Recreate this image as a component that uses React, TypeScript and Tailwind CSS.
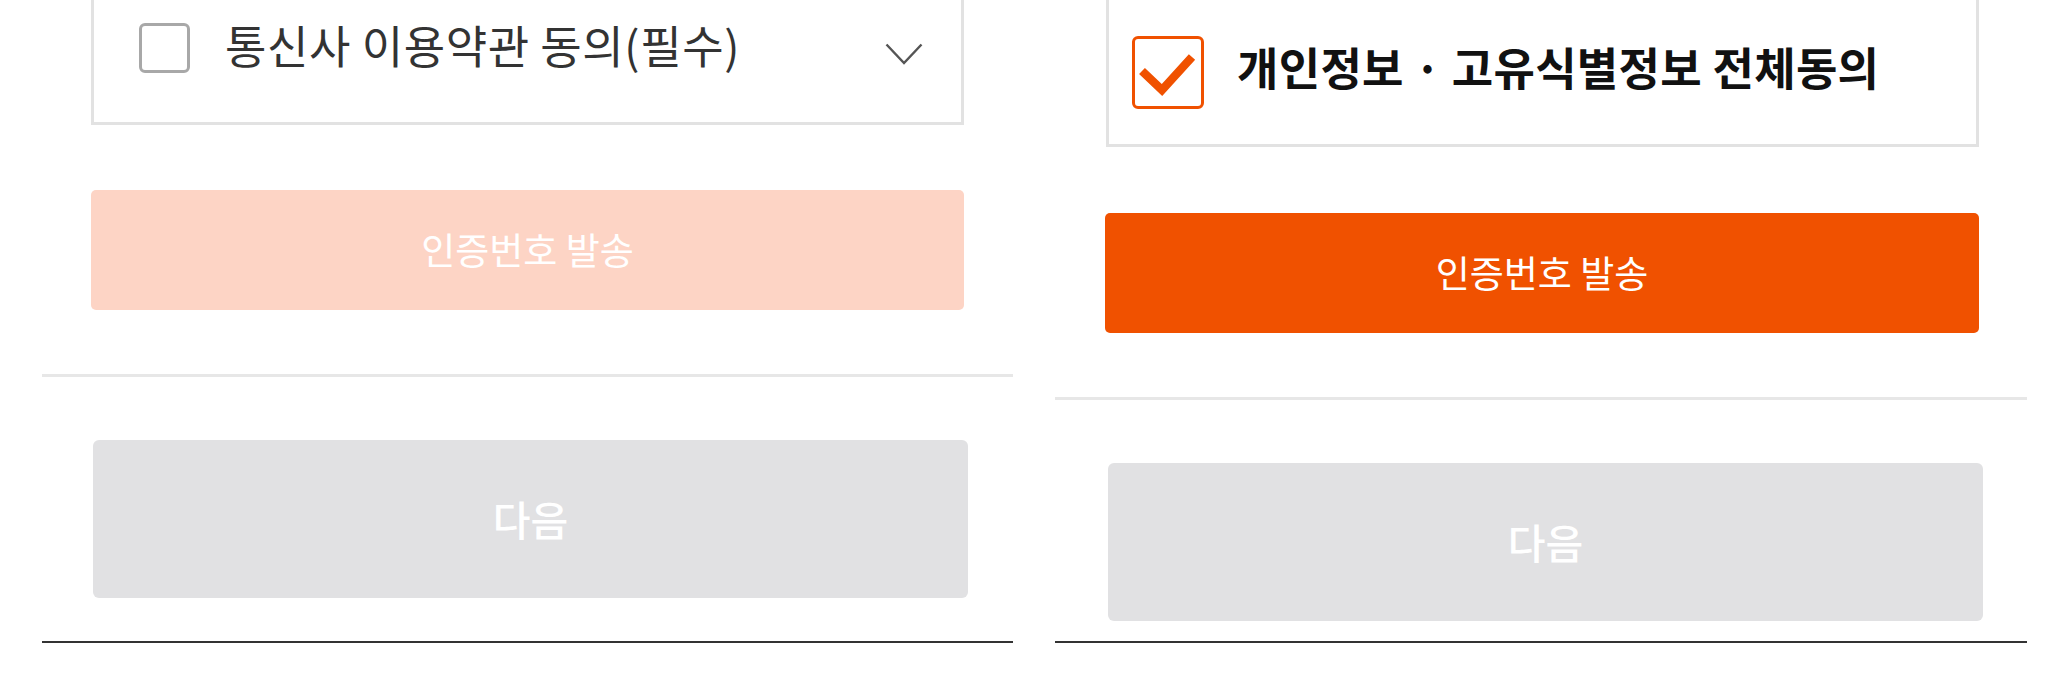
import React from "react";

const font = { fontFamily: '"Noto Sans CJK KR", "Noto Sans", sans-serif' };

function ChevronDown() {
  return (
    <svg width="38" height="22" viewBox="0 0 38 22" fill="none" className="shrink-0">
      <path d="M1.5 1.5 L19 20 L36.5 1.5" stroke="#555555" strokeWidth="2.4" />
    </svg>
  );
}

function CheckMark() {
  return (
    <svg width="66" height="67" viewBox="0 0 66 67" fill="none">
      <path d="M7 32 L27 51 L57 18" stroke="#f05100" strokeWidth="8.5" />
    </svg>
  );
}

function Divider() {
  return <div className="h-[3px] w-full bg-[#e7e7e7]" />;
}

function NextButton({ className }: { className: string }) {
  return (
    <button
      disabled
      className={`h-[158px] w-[875px] rounded-[6px] bg-[#e1e1e3] text-[41px] font-medium text-white ${className}`}
    >
      다음
    </button>
  );
}

function LeftColumn() {
  return (
    <div className="flex h-[674px] w-[971px] flex-col pb-[31px]">
      <div className="ml-[49px] flex h-[125px] w-[873px] items-start border-x-[3px] border-b-[3px] border-[#e2e2e2] pl-[45px] pr-[38px] pt-[23px]">
        <div className="h-[50px] w-[51px] shrink-0 rounded-[6px] border-[3px] border-[#a8a8a8] bg-white" />
        <span className="ml-[35px] text-[45px] leading-[44px] tracking-[0.6px] text-[#333333]">통신사 이용약관 동의(필수)</span>
        <div className="ml-auto mt-[20px]">
          <ChevronDown />
        </div>
      </div>
      <button
        disabled
        className="ml-[49px] mt-[65px] h-[120px] w-[873px] rounded-[5px] bg-[#fdd4c5] text-[37px] text-white"
      >
        인증번호 발송
      </button>
      <div className="mt-[64px]">
        <Divider />
      </div>
      <NextButton className="ml-[51px] mt-[63px]" />
      <div className="mt-auto h-[2px] w-full bg-[#333333]" />
    </div>
  );
}

function RightColumn() {
  return (
    <div className="flex h-[674px] w-[972px] flex-col pb-[31px]">
      <div className="ml-[51px] flex h-[147px] w-[873px] items-start border-x-[3px] border-b-[3px] border-[#e2e2e2] pl-[23px] pt-[36px]">
        <div className="flex h-[73px] w-[72px] shrink-0 items-center justify-center rounded-[6px] border-[3px] border-[#f05100] bg-white">
          <CheckMark />
        </div>
        <span className="ml-[33px] text-[45px] font-bold leading-[62px] tracking-[0.3px] text-[#111111]">개인정보 · 고유식별정보 전체동의</span>
      </div>
      <button className="ml-[50px] mt-[66px] h-[120px] w-[874px] rounded-[5px] bg-[#f05100] text-[37px] text-white">
        인증번호 발송
      </button>
      <div className="mt-[64px]">
        <Divider />
      </div>
      <NextButton className="ml-[53px] mt-[63px] w-[873px]" />
      <div className="mt-auto h-[2px] w-full bg-[#333333]" />
    </div>
  );
}

export default function App() {
  return (
    <div className="flex h-[674px] w-[2048px] overflow-hidden bg-white pl-[42px]" style={font}>
      <LeftColumn />
      <div className="ml-[42px]">
        <RightColumn />
      </div>
    </div>
  );
}
